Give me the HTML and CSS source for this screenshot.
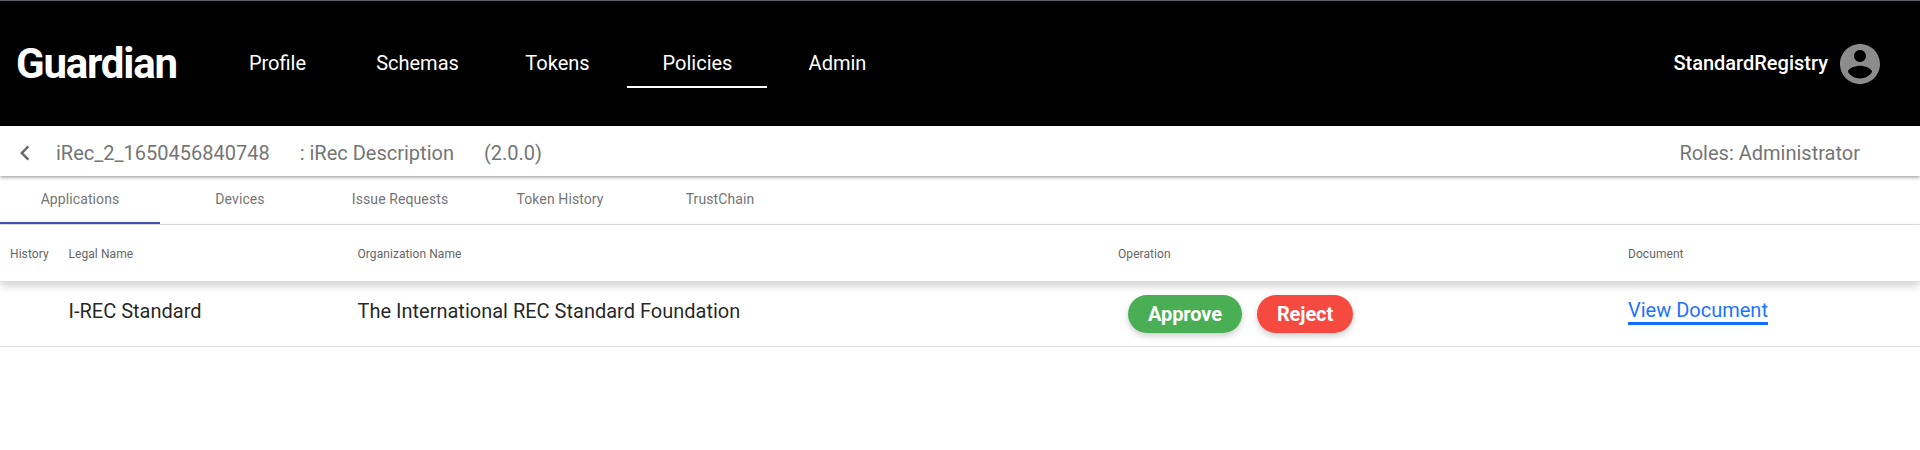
FILE: index.html
```html
<!DOCTYPE html>
<html lang="en">
<head>
<meta charset="utf-8">
<title>Guardian</title>
<link rel="stylesheet" href="styles.css">
</head>
<body>
<header class="topbar">
  <div class="logo">Guardian</div>
  <nav class="nav">
    <a class="nav-item">Profile</a>
    <a class="nav-item">Schemas</a>
    <a class="nav-item">Tokens</a>
    <a class="nav-item active">Policies</a>
    <a class="nav-item">Admin</a>
  </nav>
  <div class="user">
    <span class="user-name">StandardRegistry</span>
    <svg class="avatar" viewBox="2 2 20 20"><path fill="#8c8c8c" d="M12 2C6.480 2 2 6.480 2 12s4.480 10 10 10 10-4.480 10-10S17.520 2 12 2zm0 3c1.660 0 3 1.340 3 3s-1.340 3-3 3-3-1.340-3-3 1.340-3 3-3zm0 14.200c-2.500 0-4.710-1.280-6-3.220.030-1.990 4-3.080 6-3.080 1.990 0 5.970 1.090 6 3.080-1.290 1.940-3.500 3.220-6 3.220z"/></svg>
  </div>
</header>
<section class="policy">
  <svg class="back" viewBox="0 0 24 24"><path fill="#6a6a6a" d="M15.410 7.410 14 6l-6 6 6 6 1.410-1.410L10.830 12z"/></svg>
  <span class="policy-name">iRec_2_1650456840748</span>
  <span class="policy-desc">: iRec Description</span>
  <span class="policy-version">(2.0.0)</span>
  <span class="roles">Roles: Administrator</span>
</section>
<div class="tabs">
  <div class="tab selected">Applications</div>
  <div class="tab">Devices</div>
  <div class="tab">Issue Requests</div>
  <div class="tab">Token History</div>
  <div class="tab">TrustChain</div>
</div>
<div class="table">
  <div class="row head">
    <div>History</div><div>Legal Name</div><div>Organization Name</div><div>Operation</div><div>Document</div>
  </div>
  <div class="row body">
    <div></div>
    <div>I-REC Standard</div>
    <div>The International REC Standard Foundation</div>
    <div class="actions"><button class="btn approve">Approve</button><button class="btn reject">Reject</button></div>
    <div><a class="link">View Document</a></div>
  </div>
</div>
</body>
</html>
```
FILE: styles.css
```css
* { box-sizing: border-box; }
body { margin: 0; background: #fff; font-family: Roboto, "Liberation Sans", sans-serif; font-size: 20px; color: rgba(0,0,0,.87); white-space: nowrap; }
.topbar { display: flex; align-items: center; height: 126px; background: #000; border-top: 1px solid #5f6164; color: #fff; padding: 0 40px 0 16px; }
.logo { width: 191px; font-size: 42px; font-weight: 700; letter-spacing: -1.2px; line-height: 48px; }
.nav { display: flex; }
.nav-item { width: 140px; height: 49px; padding: 13px 0 0 1px; line-height: 23px; text-align: center; border-bottom: 2px solid transparent; }
.nav-item.active { border-bottom-color: #fff; }
.user { margin-left: auto; display: flex; align-items: center; gap: 12px; font-weight: 500; }
.user-name { padding-bottom: 2px; }
.avatar { width: 40px; height: 40px; }
.policy { position: relative; z-index: 1; display: flex; align-items: center; height: 50px; padding: 4px 60px 0 10px; background: #fff; color: #757575; box-shadow: 0 1px 4px rgba(0,0,0,.45); }
.back { width: 30px; height: 30px; margin-right: 16px; }
.policy-name { margin-right: 30px; }
.policy-desc { margin-right: 30px; }
.roles { margin-left: auto; }
.tabs { display: flex; height: 49px; border-bottom: 1px solid #dedede; }
.tab { width: 160px; height: 48px; line-height: 46px; text-align: center; font-size: 14px; letter-spacing: .1px; color: #757575; border-bottom: 2px solid transparent; }
.tab.selected { border-bottom-color: #3f51b5; }
.row { display: grid; grid-template-columns: 58.5px 289px 760.5px 510px 1fr; padding-left: 10px; align-items: center; border-bottom: 1px solid #dedede; }
.head { height: 57px; padding-top: 2px; font-size: 12px; letter-spacing: .07px; color: #666; box-shadow: 0 4px 8px rgba(0,0,0,.18); }
.body { height: 65px; padding-bottom: 6px; font-size: 20px; }
.actions { display: flex; gap: 15px; padding: 5px 0 0 10px; }
.btn { height: 38px; border: 0; border-radius: 19px; padding: 0; font: 700 20px Roboto, "Liberation Sans", sans-serif; letter-spacing: -.1px; color: #fff; box-shadow: 0 3px 6px rgba(0,0,0,.2); }
.approve { width: 114px; background: #4aae54; }
.reject { width: 96px; background: #f6493f; }
.link { display: block; width: fit-content; padding-top: 2px; line-height: 23px; color: #1a73ff; border-bottom: 3px solid #0f70ff; }
```
